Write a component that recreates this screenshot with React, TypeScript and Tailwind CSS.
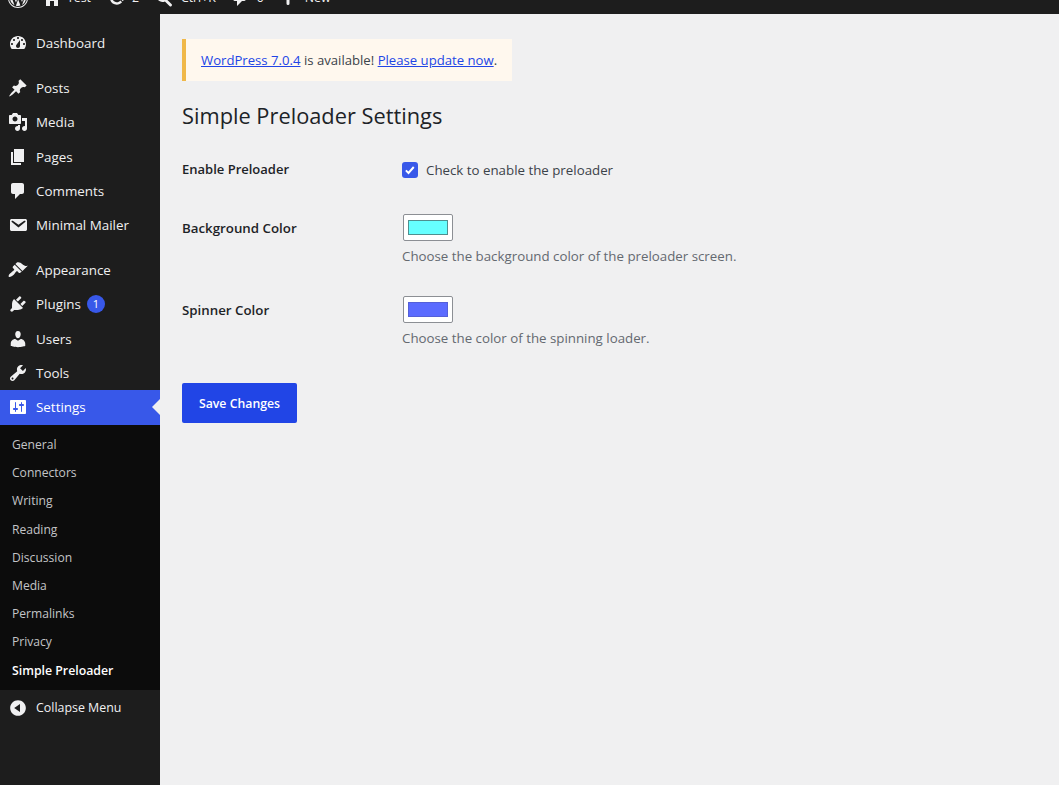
import React from "react";

const P: Record<string, string> = {
  dashboard: "M3.76 16h12.48c1.1-1.37 1.76-3.11 1.76-5 0-4.42-3.58-8-8-8s-8 3.58-8 8c0 1.89.66 3.63 1.76 5zM10 4c.55 0 1 .45 1 1s-.45 1-1 1-1-.45-1-1 .45-1 1-1zM6 6c.55 0 1 .45 1 1s-.45 1-1 1-1-.45-1-1 .45-1 1-1zm8 0c.55 0 1 .45 1 1s-.45 1-1 1-1-.45-1-1 .45-1 1-1zm-5.37 5.55L12 7v6c0 1.1-.9 2-2 2s-2-.9-2-2c0-.57.24-1.08.63-1.45zM4 10c.55 0 1 .45 1 1s-.45 1-1 1-1-.45-1-1 .45-1 1-1zm12 0c.55 0 1 .45 1 1s-.45 1-1 1-1-.45-1-1 .45-1 1-1z",
  post: "M10.44 3.02l1.82-1.82 6.36 6.35-1.83 1.82c-1.05-.68-2.48-.57-3.41.36l-.75.75c-.92.93-1.04 2.35-.35 3.41l-1.83 1.82-2.41-2.41-2.8 2.79c-.42.42-3.38 2.71-3.8 2.29s1.86-3.39 2.28-3.81l2.79-2.79L4.1 9.36l1.83-1.82c1.05.69 2.48.57 3.4-.36l.75-.75c.93-.92 1.05-2.35.36-3.41z",
  media: "M13 11V4c0-.55-.45-1-1-1h-1.67L9 1H5L3.67 3H2c-.55 0-1 .45-1 1v7c0 .55.45 1 1 1h10c.55 0 1-.45 1-1zM7 4.5c1.38 0 2.5 1.12 2.5 2.5S8.38 9.5 7 9.5 4.5 8.38 4.5 7 5.62 4.5 7 4.5zM14 6h5v10.5c0 1.38-1.12 2.5-2.5 2.5S14 17.88 14 16.5s1.12-2.5 2.5-2.5c.17 0 .34.02.5.05V9h-3V6zm-4 8.05V13h2v3.5c0 1.38-1.12 2.5-2.5 2.5S7 17.88 7 16.5 8.12 14 9.5 14c.17 0 .34.02.5.05z",
  page: "M6 15V2h10v13H6zm-1 1h8v2H3V5h2v11z",
  comments: "M5 2h9c1.1 0 2 .9 2 2v7c0 1.1-.9 2-2 2h-2l-5 5v-5H5c-1.1 0-2-.9-2-2V4c0-1.1.9-2 2-2z",
  email: "M3.87 4h13.25C18.37 4 19 4.59 19 5.79v8.42c0 1.19-.63 1.79-1.88 1.79H3.87c-1.25 0-1.88-.6-1.88-1.79V5.79c0-1.2.63-1.79 1.88-1.79zm6.62 8.6l6.74-5.53c.24-.2.43-.66.13-1.07-.29-.41-.82-.42-1.17-.17l-5.7 3.86L4.8 5.83c-.35-.25-.88-.24-1.17.17-.3.41-.11.87.13 1.07z",
  appearance: "M14.48 11.06L7.41 3.99l1.5-1.5c.5-.56 2.3-.47 3.51.32 1.21.8 1.43 1.28 2.91 2.1 1.18.64 2.45 1.26 4.45.85zm-.71.71L6.7 4.7 4.93 6.47c-.39.39-.39 1.02 0 1.41l1.06 1.06c.39.39.39 1.03 0 1.42-.6.6-1.43 1.11-2.21 1.69-.35.26-.7.53-1.01.84C1.43 13.23.1 16.01.85 16.76s3.53-.58 4.87-1.92c.31-.31.58-.66.84-1.01.58-.78 1.09-1.61 1.69-2.21.39-.39 1.02-.39 1.41 0l1.06 1.06c.39.39 1.02.39 1.41 0z",
  plugins: "M13.11 4.36L9.87 7.6 8 5.73l3.24-3.24c.35-.34 1.05-.2 1.56.32.52.51.66 1.21.31 1.55zm-8 1.77l.91-1.12 9.01 9.01-1.19.84c-.71.71-2.63 1.16-3.82 1.16H6.14L4.9 17.26c-.59.59-1.54.59-2.12 0-.59-.58-.59-1.53 0-2.12l1.24-1.24v-3.88c0-1.13.4-3.19 1.09-3.89zm7.26 3.97l3.24-3.24c.34-.35 1.04-.21 1.55.31.52.51.66 1.21.31 1.55l-3.24 3.25z",
  users: "M10 9.25c-2.27 0-2.73-3.44-2.73-3.44C7 4.02 7.82 2 9.97 2c2.16 0 2.98 2.02 2.71 3.81 0 0-.41 3.44-2.68 3.44zm0 2.57L12.72 10c2.39 0 4.52 2.33 4.52 4.53v2.49s-3.65 1.13-7.24 1.13c-3.65 0-7.24-1.13-7.24-1.13v-2.49c0-2.25 1.94-4.48 4.47-4.48z",
  tools: "M16.68 9.77c-1.34 1.34-3.3 1.67-4.95.99l-5.41 6.52c-.99.99-2.59.99-3.58 0s-.99-2.59 0-3.57l6.52-5.42c-.68-1.65-.35-3.61.99-4.95 1.28-1.28 3.12-1.62 4.72-1.06l-2.89 2.89 2.82 2.82 2.86-2.87c.53 1.58.18 3.39-1.08 4.65zM3.81 16.21c.4.39 1.04.39 1.43 0 .4-.4.4-1.04 0-1.43-.39-.4-1.03-.4-1.43 0-.39.39-.39 1.03 0 1.43z",
  settings: "M18 16V4c0-.55-.45-1-1-1H3c-.55 0-1 .45-1 1v12c0 .55.45 1 1 1h14c.55 0 1-.45 1-1zM8 11h1c.55 0 1 .45 1 1s-.45 1-1 1H8v1.5c0 .28-.22.5-.5.5s-.5-.22-.5-.5V13H6c-.55 0-1-.45-1-1s.45-1 1-1h1V5.5c0-.28.22-.5.5-.5s.5.22.5.5V11zm5-2h-1c-.55 0-1-.45-1-1s.45-1 1-1h1V5.5c0-.28.22-.5.5-.5s.5.22.5.5V7h1c.55 0 1 .45 1 1s-.45 1-1 1h-1v5.5c0 .28-.22.5-.5.5s-.5-.22-.5-.5V9z",
  collapse: "M10 2.16c4.33 0 7.84 3.51 7.84 7.84s-3.51 7.84-7.84 7.84S2.16 14.33 2.16 10 5.71 2.16 10 2.16zm2 11.72V6.12L6.18 9.97z",
  wp: "M20 10c0-5.52-4.48-10-10-10S0 4.48 0 10s4.48 10 10 10 10-4.48 10-10zM10 1.01c4.97 0 8.99 4.02 8.99 8.99s-4.02 8.99-8.99 8.99S1.01 14.97 1.01 10 5.03 1.01 10 1.01zM8.01 14.82L4.96 6.61c.49-.03 1.05-.08 1.05-.08.43-.05.38-1.01-.06-.99 0 0-1.29.1-2.13.1-.15 0-.33 0-.52-.01 1.44-2.17 3.9-3.6 6.7-3.6 2.09 0 3.99.79 5.41 2.09-.6-.08-1.45.35-1.45 1.42 0 .66.38 1.22.79 1.88.31.54.5 1.22.5 2.21 0 1.34-1.27 4.48-1.27 4.48l-2.71-7.5c.48-.03.75-.16.75-.16.43-.05.38-1.1-.05-1.08 0 0-1.3.11-2.14.11-.78 0-2.11-.11-2.11-.11-.43-.02-.48 1.06-.05 1.08l.84.08 1.12 3.04zm6.02 2.15L16.64 10s.67-1.69.39-3.81c.63 1.14.94 2.42.94 3.81 0 2.96-1.56 5.58-3.94 6.97zM2.68 6.77L6.5 17.25c-2.67-1.3-4.47-4.08-4.47-7.25 0-1.16.2-2.23.65-3.23zm7.45 4.53l2.29 6.25c-.75.27-1.57.42-2.42.42-.72 0-1.41-.11-2.06-.3z",
  home: "M16 8.5l1.53 1.53-1.06 1.06L10 4.62l-6.47 6.47-1.06-1.06L10 2.5l4 4v-2h2v4zm-6-2.46l6 5.99V18H12v-5H8v5H4v-5.97z",
  update: "M10.2 3.28c3.53 0 6.43 2.61 6.92 6h2.08l-3.5 4-3.5-4h2.32c-.45-1.97-2.21-3.45-4.32-3.45-1.45 0-2.73.71-3.54 1.78L4.95 5.66C6.23 4.2 8.11 3.28 10.2 3.28zm-.4 13.44c-3.52 0-6.43-2.61-6.92-6H.8l3.5-4c1.17 1.33 2.33 2.67 3.5 4H5.48c.45 1.97 2.21 3.45 4.32 3.45 1.45 0 2.73-.71 3.54-1.78l1.71 1.95c-1.28 1.46-3.15 2.38-5.25 2.38z",
  search: "M8 2a6 6 0 0 1 4.9 9.5l4.6 4.6a1.4 1.4 0 0 1-2 2l-4.6-4.6A6 6 0 1 1 8 2zm0 2.5a3.5 3.5 0 1 0 0 7 3.5 3.5 0 0 0 0-7z",
  plus: "M8.5 4.5a1.5 1.5 0 0 1 3 0v4h4a1.5 1.5 0 0 1 0 3h-4v4a1.5 1.5 0 0 1-3 0v-4h-4a1.5 1.5 0 0 1 0-3h4z",
};

function Ic({ n }: { n: string }) {
  return (
    <svg viewBox="0 0 20 20" className="w-5 h-5 shrink-0 fill-current" aria-hidden="true">
      <path fillRule="evenodd" d={P[n]} />
    </svg>
  );
}

function Row({ icon, label, active, badge, mb }: { icon: string; label: string; active?: boolean; badge?: string; mb?: boolean }) {
  return (
    <div className={`h-[34.4px] flex items-center pl-2 ${active ? "bg-[#3858e9] text-white relative" : "text-[#f0f0f1]"} ${mb ? "mb-[10.2px]" : ""}`}>
      <Ic n={icon} />
      <span className="ml-2">{label}</span>
      {badge && (
        <span className="ml-[6px] w-[18px] h-[18px] rounded-full bg-[#3858e9] text-white text-[11px] flex items-center justify-center">{badge}</span>
      )}
      {active && (
        <span className="absolute right-0 top-[9px] w-0 h-0 border-y-[8px] border-y-transparent border-r-[8px] border-r-[#f0f0f1]" />
      )}
    </div>
  );
}

const subs = ["General", "Connectors", "Writing", "Reading", "Discussion", "Media", "Permalinks", "Privacy"];

function TopItem({ icon, text, c, g }: { icon: string; text: string; c: string; g: string }) {
  return (
    <div className={`flex items-center ${c}`}>
      <Ic n={icon} />
      <span className={g}>{text}</span>
    </div>
  );
}

export default function App() {
  return (
    <div className="h-[785px] overflow-hidden bg-[#f0f0f1] flex flex-col text-[13.3px] font-['Open_Sans',sans-serif] text-[#3c434a]">
      <header className="h-[14px] shrink-0 bg-[#1d1d1d] overflow-hidden flex items-end text-[12.3px] text-[#f0f0f1]">
        <div className="h-8 shrink-0 flex items-center pl-[8px]">
          <Ic n="wp" />
          <TopItem icon="home" text="Test" c="ml-[14px]" g="ml-[5px]" />
          <TopItem icon="update" text="2" c="ml-[16px]" g="ml-[5px]" />
          <TopItem icon="search" text="Ctrl+K" c="ml-[15px]" g="ml-[7px]" />
          <TopItem icon="comments" text="0" c="ml-[14px]" g="ml-[7px]" />
          <TopItem icon="plus" text="New" c="ml-[14px]" g="ml-[7px]" />
        </div>
      </header>
      <div className="flex flex-1 min-h-0">
        <aside className="w-40 shrink-0 bg-[#1d1d1d] pt-3 text-[13.4px]">
          <Row icon="dashboard" label="Dashboard" mb />
          <Row icon="post" label="Posts" />
          <Row icon="media" label="Media" />
          <Row icon="page" label="Pages" />
          <Row icon="comments" label="Comments" />
          <Row icon="email" label="Minimal Mailer" mb />
          <Row icon="appearance" label="Appearance" />
          <Row icon="plugins" label="Plugins" badge="1" />
          <Row icon="users" label="Users" />
          <Row icon="tools" label="Tools" />
          <Row icon="settings" label="Settings" active />
          <div className="bg-[#0c0c0c] pt-[6.4px] pb-[5.6px] text-[12.1px] text-[#c3c4c7]">
            {subs.map((s) => (
              <div key={s} className="h-[28.2px] flex items-center pl-3">{s}</div>
            ))}
            <div className="h-[28.2px] pt-px flex items-center pl-3 text-white font-semibold text-[12.3px]">Simple Preloader</div>
          </div>
          <div className="h-[34px] pt-px flex items-center pl-2 text-[#f0f0f1] text-[12.4px]">
            <Ic n="collapse" />
            <span className="ml-2">Collapse Menu</span>
          </div>
        </aside>
        <main className="flex-1 min-w-0 pl-[22px] pt-[25px]">
          <div className="w-[330px] h-[42px] bg-[#fff8ee] border-l-4 border-[#f0b849] flex items-center pl-[15px] pt-px text-[13.15px]">
            <p>
              <a className="text-[#2145e6] underline">WordPress 7.0.4</a> is available!{" "}
              <a className="text-[#2145e6] underline">Please update now</a>.
            </p>
          </div>
          <h1 className="mt-[20px] text-[21.8px] leading-[29px] text-[#1d2327] font-normal">Simple Preloader Settings</h1>
          <div className="mt-[28px] flex h-[46px] items-start">
            <div className="w-[220px] font-semibold text-[#1d2327] leading-[22px] text-[13px]">Enable Preloader</div>
            <label className="flex items-center h-[22px] pt-[2px]">
              <span className="w-4 h-4 rounded-[3px] bg-[#3858e9] flex items-center justify-center mr-2">
                <svg viewBox="0 0 16 16" className="w-3 h-3 stroke-white fill-none" strokeWidth="2.6"><path d="M2.5 8.5l3.5 3.5 7-8" /></svg>
              </span>
              <span className="pt-[2px]">Check to enable the preloader</span>
            </label>
          </div>
          <div className="flex mt-[10px] h-[82px] items-start">
            <div className="w-[220px] font-semibold text-[#1d2327] leading-[28px]">Background Color</div>
            <div>
              <div className="ml-px w-[50px] h-[27px] bg-white border border-[#8c8f94] rounded-[2px] p-[4px] flex">
                <div className="flex-1 h-[15px] mt-px bg-[#66ffff] border border-[#4f8f8f]" />
              </div>
              <p className="mt-[5px] leading-[20px] text-[#646970]">Choose the background color of the preloader screen.</p>
            </div>
          </div>
          <div className="flex h-[87px] items-start">
            <div className="w-[220px] font-semibold text-[#1d2327] leading-[28px]">Spinner Color</div>
            <div>
              <div className="ml-px w-[50px] h-[27px] bg-white border border-[#8c8f94] rounded-[2px] p-[4px] flex">
                <div className="flex-1 h-[15px] mt-px bg-[#5b6bff] border border-[#5560d8]" />
              </div>
              <p className="mt-[5px] leading-[20px] text-[#646970]">Choose the color of the spinning loader.</p>
            </div>
          </div>
          <button className="w-[115px] h-10 pt-[2px] rounded-[2px] bg-[#2145e6] text-white text-[12.3px] font-semibold">Save Changes</button>
        </main>
      </div>
    </div>
  );
}
